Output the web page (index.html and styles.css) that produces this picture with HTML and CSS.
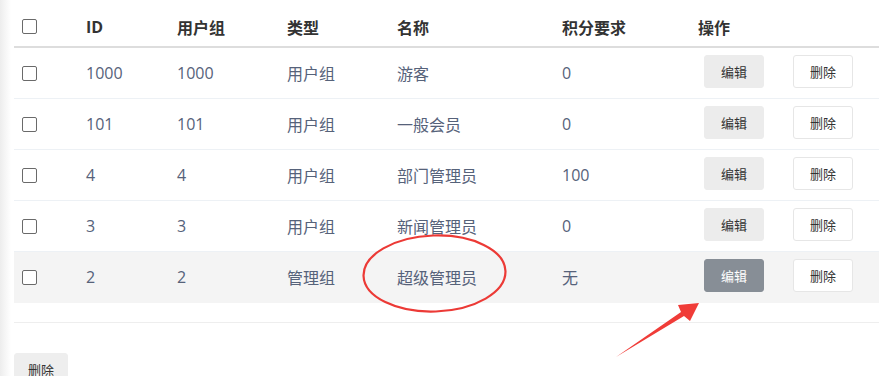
FILE: index.html
```html
<!DOCTYPE html>
<html lang="zh-CN">
<head>
<meta charset="utf-8">
<title>用户组管理</title>
<link rel="stylesheet" href="styles.css">
</head>
<body>
<main class="page">
  <table class="grid">
    <colgroup>
      <col class="c-check"><col class="c-id"><col class="c-group"><col class="c-type"><col class="c-name"><col class="c-score"><col class="c-ops">
    </colgroup>
    <thead>
      <tr>
        <th><span class="box"></span></th>
        <th>ID</th>
        <th>用户组</th>
        <th>类型</th>
        <th>名称</th>
        <th>积分要求</th>
        <th>操作</th>
      </tr>
    </thead>
    <tbody>
      <tr>
        <td><span class="box"></span></td>
        <td>1000</td><td>1000</td><td>用户组</td><td>游客</td><td>0</td>
        <td><div class="ops"><button class="btn edit">编辑</button><button class="btn del">删除</button></div></td>
      </tr>
      <tr>
        <td><span class="box"></span></td>
        <td>101</td><td>101</td><td>用户组</td><td>一般会员</td><td>0</td>
        <td><div class="ops"><button class="btn edit">编辑</button><button class="btn del">删除</button></div></td>
      </tr>
      <tr>
        <td><span class="box"></span></td>
        <td>4</td><td>4</td><td>用户组</td><td>部门管理员</td><td>100</td>
        <td><div class="ops"><button class="btn edit">编辑</button><button class="btn del">删除</button></div></td>
      </tr>
      <tr>
        <td><span class="box"></span></td>
        <td>3</td><td>3</td><td>用户组</td><td>新闻管理员</td><td>0</td>
        <td><div class="ops"><button class="btn edit">编辑</button><button class="btn del">删除</button></div></td>
      </tr>
      <tr class="hover">
        <td><span class="box"></span></td>
        <td>2</td><td>2</td><td>管理组</td><td>超级管理员</td><td>无</td>
        <td><div class="ops"><button class="btn edit active">编辑</button><button class="btn del">删除</button></div></td>
      </tr>
    </tbody>
    <tfoot>
      <tr><td colspan="7"></td></tr>
    </tfoot>
  </table>
  <div class="actions">
    <button class="btn bulk">删除</button>
  </div>
</main>

<!-- annotation marks drawn over the table -->
<svg class="marks" width="879" height="376" viewBox="0 0 879 376">
  <ellipse cx="434.5" cy="273.5" rx="71" ry="38" fill="none" stroke="#ec3a36" stroke-width="2.2" transform="rotate(-2 434.5 273.5)"/>
  <polygon points="616,357 681,312 678,305 699,303 690,321 684,316" fill="#f03c38"/>
</svg>
</body>
</html>
```

FILE: styles.css
```css
html, body {
  margin: 0;
  height: 100%;
}

body {
  background: linear-gradient(to right, #ededed 0, #f7f7f7 6px, #ffffff 11px);
  font-family: "Open Sans", "Noto Sans CJK SC", sans-serif;
  color: #56627a;
  overflow: hidden;
  position: relative;
}

.page {
  padding-left: 14px;
}

.grid {
  width: 865px;
  border-collapse: collapse;
  table-layout: fixed;
  font-size: 16px;
}

.c-check { width: 64px; }
.c-id { width: 91px; }
.c-group { width: 110px; }
.c-type { width: 110px; }
.c-name { width: 165px; }
.c-score { width: 136px; }
.c-ops { width: 189px; }

th, td {
  text-align: left;
  padding: 0 0 0 8px;
  white-space: nowrap;
}

th {
  height: 47px;
  padding-top: 7px;
  box-sizing: border-box;
  font-weight: 700;
  color: #333;
  border-bottom: 2px solid #dddddd;
}

tbody td {
  height: 51px;
  padding-top: 1px;
  box-sizing: border-box;
  border-bottom: 1px solid #edf1f5;
}

tbody tr.hover td {
  background: #f4f4f4;
  border-bottom-color: #f4f4f4;
}

tfoot td {
  height: 20px;
  box-sizing: border-box;
  padding: 0;
  border-bottom: 1px solid #eeeeee;
}

.box {
  display: block;
  width: 13px;
  height: 13px;
  border: 1.5px solid #6a6a6a;
  border-radius: 2px;
  background: #fff;
}

.ops {
  display: flex;
  gap: 29px;
  padding-left: 6px;
  padding-bottom: 3px;
}

.btn {
  font-family: "Noto Sans CJK SC", sans-serif;
  font-size: 13px;
  color: #333;
  height: 33px;
  width: 60px;
  border-radius: 3px;
  padding: 0;
  cursor: pointer;
}

.edit {
  background: #ececec;
  border: 1px solid #ececec;
}

.edit.active {
  background: #878e96;
  border-color: #878e96;
  color: #fff;
}

.del {
  background: #fff;
  border: 1px solid #e6e6e6;
}

.actions {
  padding-top: 30px;
}

.bulk {
  width: 54px;
  background: #eeeeee;
  border: 1px solid #eeeeee;
  height: 34px;
}

.marks {
  position: absolute;
  left: 0;
  top: 0;
  pointer-events: none;
}
```
